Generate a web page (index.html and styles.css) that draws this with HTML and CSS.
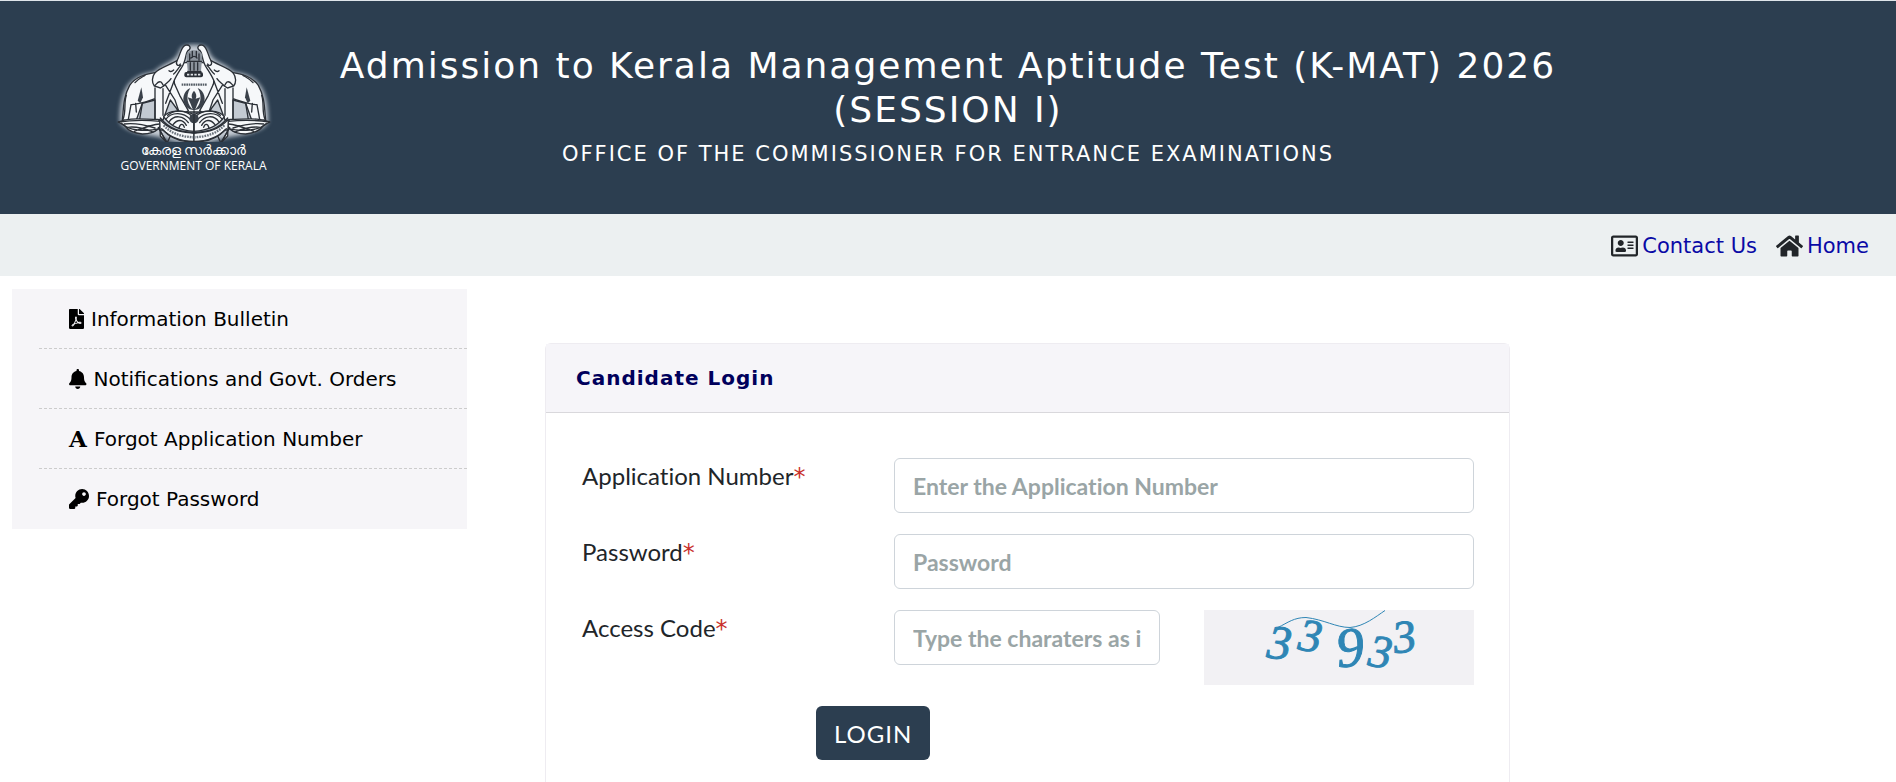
FILE: index.html
```
<!DOCTYPE html>
<html lang="en">
<head>
    <meta charset="UTF-8">
    <title>K-MAT 2026 - Candidate Login</title>
    <meta name="viewport" content="width=device-width, initial-scale=1.0">
    <link rel="stylesheet" href="styles.css">
</head>
<body>
    <header class="site-header">
        <div class="logo">
            <svg class="emblem" viewBox="70 30 474 300" aria-hidden="true">
                <defs>
                    <g id="elephant">
                        <path class="body" d="M92 264C96 230 94 196 114 160C134 132 166 126 190 122C206 106 236 98 256 86C266 70 266 48 280 40C292 36 300 46 292 54C280 56 286 84 270 106C260 122 250 136 246 150L264 190L290 236L270 250L236 204L214 264L190 266L190 204L152 214L134 264L104 266Z"/>
                        <path class="line" d="M190 122C180 136 180 152 188 162L206 168L216 162C222 154 232 150 238 140M188 162C196 156 198 146 208 150C214 156 214 160 216 162M232 116C238 122 242 118 246 114M190 168V264M214 170V250M120 218C146 216 166 208 190 200M246 150L222 214M222 160L250 204L262 240M256 86C250 100 262 104 266 96M104 190C96 214 104 238 94 262M118 218L110 262M132 214L134 240M152 214L144 262M160 130C150 136 140 140 130 152M268 100C258 110 254 120 246 126"/>
                        <path class="shade" d="M149 166L154 196L146 214L138 206Z"/>
                        <path class="body" d="M80 270C110 256 150 262 200 262C216 284 196 304 152 306C128 304 110 296 100 282Z"/>
                        <path class="line" d="M80 270C120 264 150 262 206 268M98 276C124 272 158 278 190 288M108 286C134 282 164 292 184 300M128 298C150 290 176 278 204 276M90 274C110 296 160 300 206 290"/>
                        <path class="body" d="M204 262C238 300 276 300 307 304L307 330C262 330 236 318 214 294L204 294L226 332L206 312Z"/>
                        <path class="line" d="M206 258C236 296 270 298 307 302M210 290C238 320 270 328 307 328M200 286L226 334L236 312"/>
                        <path class="motto" d="M216 280C240 306 270 314 307 316"/>
                        <path class="body" d="M216 254C230 234 276 232 307 248L307 298C268 296 236 284 216 254Z"/>
                        <path class="line" d="M222 262C240 238 276 240 296 262M232 270C248 246 276 252 290 272M244 278C258 260 274 262 284 280M228 250C250 230 284 236 300 252M262 288C266 274 274 274 278 286"/>
                        <path class="curl" d="M296 168C276 176 268 204 282 222C290 232 300 234 306 234C288 222 280 194 296 168Z"/>
                    </g>
                </defs>
                <path class="glow" d="M84 270C84 190 100 130 188 120C220 86 250 96 266 50C280 34 334 34 348 50C364 96 394 86 426 120C514 130 530 190 530 270C510 306 430 310 400 318C340 340 274 340 214 318C184 310 104 306 84 270Z"/>
                <path class="body" d="M272 92L342 92L368 134L356 240L258 240L246 134Z"/>
                <use href="#elephant"/>
                <use href="#elephant" transform="translate(614 0) scale(-1 1)"/>
                <path class="pillar" d="M284 70C286 50 328 50 332 70L328 116L288 116Z"/>
                <path class="line" d="M294 66V84M302 58V76M314 58V76M322 66V84M286 88H330M298 78Q307 68 316 78M288 118H328M296 92V114M307 92V114M318 92V114"/>
                <rect class="base" x="278" y="120" width="56" height="16" rx="6"/>
                <path class="mark" d="M286 128H326"/>
                <path class="legend" d="M270 158H345"/>
                <path class="shade" d="M307 176C314 184 316 192 312 200L326 196L318 214L310 234H304L296 214L288 196L302 200C298 192 300 184 307 176Z"/>
                <circle class="shade" cx="307" cy="260" r="14"/>
                <path class="line" d="M307 236V302"/>
            </svg>
            <span class="logo-ml" lang="ml">കേരള സര്‍ക്കാര്‍</span>
            <span class="logo-en">GOVERNMENT OF KERALA</span>
        </div>
        <div class="titles">
            <h1>Admission to Kerala Management Aptitude Test (K-MAT) 2026 (SESSION I)</h1>
            <p>OFFICE OF THE COMMISSIONER FOR ENTRANCE EXAMINATIONS</p>
        </div>
    </header>

    <nav class="top-nav">
        <a href="#contact">
            <svg class="nav-icon" viewBox="0 0 576 512" aria-hidden="true"><path d="M528 32H48C21.5 32 0 53.5 0 80v352c0 26.5 21.5 48 48 48h480c26.5 0 48-21.5 48-48V80c0-26.5-21.5-48-48-48zm0 400H48V80h480v352zM208 256c35.3 0 64-28.7 64-64s-28.7-64-64-64-64 28.7-64 64 28.7 64 64 64zm-89.6 128h179.2c12.4 0 22.4-8.6 22.4-19.2v-19.2c0-31.8-30.1-57.6-67.2-57.6-10.8 0-18.7 8-44.8 8-26.9 0-33.4-8-44.8-8-37.1 0-67.2 25.8-67.2 57.6v19.2c0 10.6 10 19.2 22.4 19.2zM360 320h112c4.4 0 8-3.6 8-8v-16c0-4.4-3.6-8-8-8H360c-4.4 0-8 3.6-8 8v16c0 4.4 3.6 8 8 8zm0-64h112c4.4 0 8-3.6 8-8v-16c0-4.4-3.6-8-8-8H360c-4.4 0-8 3.6-8 8v16c0 4.4 3.6 8 8 8zm0-64h112c4.4 0 8-3.6 8-8v-16c0-4.4-3.6-8-8-8H360c-4.4 0-8 3.6-8 8v16c0 4.4 3.6 8 8 8z"/></svg>
            Contact Us
        </a>
        <a href="#home">
            <svg class="nav-icon" viewBox="0 0 576 512" aria-hidden="true"><path d="M280.37 148.26L96 300.11V464a16 16 0 0 0 16 16l112.06-.29a16 16 0 0 0 15.92-16V368a16 16 0 0 1 16-16h64a16 16 0 0 1 16 16v95.64a16 16 0 0 0 16 16.05L464 480a16 16 0 0 0 16-16V300L295.67 148.26a12.19 12.19 0 0 0-15.3 0zM571.6 251.47L488 182.56V44.05a12 12 0 0 0-12-12h-56a12 12 0 0 0-12 12v72.61L318.47 43a48 48 0 0 0-61 0L4.34 251.47a12 12 0 0 0-1.6 16.9l25.5 31A12 12 0 0 0 45.15 301l235.22-193.74a12.19 12.19 0 0 1 15.3 0L530.9 301a12 12 0 0 0 16.9-1.6l25.5-31a12 12 0 0 0-1.7-16.93z"/></svg>
            Home
        </a>
    </nav>

    <main>
        <aside class="sidebar">
            <ul>
                <li><a href="#bulletin">
                    <svg class="side-icon" viewBox="0 0 384 512" aria-hidden="true"><path d="M181.9 256.1c-5-16-4.9-46.9-2-46.9 8.4 0 7.6 36.9 2 46.9zm-1.7 47.2c-7.7 20.2-17.3 43.3-28.4 62.7 18.3-7 39-17.2 62.9-21.9-12.7-9.6-24.9-23.4-34.5-40.8zM86.1 428.1c0 .8 13.2-5.4 34.9-40.2-6.7 6.3-29.1 24.5-34.9 40.2zM248 160h136v328c0 13.3-10.7 24-24 24H24c-13.3 0-24-10.7-24-24V24C0 10.7 10.7 0 24 0h200v136c0 13.2 10.8 24 24 24zm-8 171.8c-20-12.2-33.3-29-42.7-53.8 4.5-18.5 11.6-46.6 6.2-64.2-4.7-29.4-42.4-26.5-47.8-6.8-5 18.3-.4 44.1 8.1 77-11.6 27.6-28.7 64.6-40.8 85.8-.1 0-.1.1-.2.1-27.1 13.9-73.6 44.5-54.5 68 5.6 6.9 16 10 21.5 10 17.9 0 35.7-18 61.1-61.8 25.8-8.5 54.1-19.1 79-23.2 21.7 11.8 47.1 19.5 64 19.5 29.2 0 31.2-32 19.7-43.4-13.9-13.6-54.3-9.7-73.6-7.2zM377 105L279 7c-4.5-4.5-10.6-7-17-7h-6v128h128v-6.1c0-6.3-2.5-12.4-7-16.9zm-74.1 255.3c4.1-2.7-2.5-11.9-42.8-9 37.1 15.8 42.8 9 42.8 9z"/></svg>
                    Information Bulletin
                </a></li>
                <li><a href="#notifications">
                    <svg class="side-icon" viewBox="0 0 448 512" aria-hidden="true"><path d="M224 512c35.32 0 63.97-28.65 63.97-64H160.03c0 35.35 28.65 64 63.97 64zm215.39-149.71c-19.32-20.76-55.47-51.99-55.47-154.29 0-77.7-54.48-139.9-127.94-155.16V32c0-17.67-14.32-32-31.98-32s-31.98 14.33-31.98 32v20.84C118.56 68.1 64.08 130.3 64.08 208c0 102.3-36.15 133.53-55.47 154.29-6 6.45-8.66 14.16-8.61 21.71.11 16.4 12.98 32 32.1 32h383.8c19.12 0 32-15.6 32.1-32 .05-7.55-2.61-15.27-8.61-21.71z"/></svg>
                    Notifications and Govt. Orders
                </a></li>
                <li><a href="#forgot-number">
                    <span class="letter-icon" aria-hidden="true">A</span>
                    Forgot Application Number
                </a></li>
                <li><a href="#forgot-password">
                    <svg class="side-icon" viewBox="0 0 512 512" aria-hidden="true"><path d="M512 176.001C512 273.203 433.202 352 336 352c-11.22 0-22.19-1.062-32.827-3.069l-24.012 27.014A23.999 23.999 0 0 1 261.223 384H224v40c0 13.255-10.745 24-24 24h-40v40c0 13.255-10.745 24-24 24H24c-13.255 0-24-10.745-24-24v-78.059c0-6.365 2.529-12.47 7.029-16.971l161.802-161.802C163.108 213.814 160 195.271 160 176 160 78.798 238.797.001 335.999 0 433.488-.001 512 78.511 512 176.001zM336 128c0 26.51 21.49 48 48 48s48-21.49 48-48-21.49-48-48-48-48 21.49-48 48z"/></svg>
                    Forgot Password
                </a></li>
            </ul>
        </aside>

        <section class="card">
            <h2>Candidate Login</h2>
            <form class="login-form">
                <div class="form-row">
                    <label for="app-number">Application Number<span class="required">*</span></label>
                    <input type="text" id="app-number" placeholder="Enter the Application Number">
                </div>
                <div class="form-row">
                    <label for="password">Password<span class="required">*</span></label>
                    <input type="password" id="password" placeholder="Password">
                </div>
                <div class="form-row code-row">
                    <label for="access-code">Access Code<span class="required">*</span></label>
                    <input type="text" id="access-code" placeholder="Type the charaters as in the picture">
                    <svg class="captcha" viewBox="0 0 270 74" role="img" aria-label="Access code">
                        <text transform="translate(62 47) rotate(6)" font-size="48">3</text>
                        <text transform="translate(93 39) rotate(8)" font-size="46">3</text>
                        <text transform="translate(134 57) rotate(-6)" font-size="56">9</text>
                        <text transform="translate(163 55) rotate(8)" font-size="46">3</text>
                        <text transform="translate(191 43) rotate(-8)" font-size="46">3</text>
                        <path d="M74 17C84 12 90 7 102 7C120 9 132 17 146 17C160 16 172 6 181 0"/>
                    </svg>
                </div>
                <button type="submit" class="login-btn">LOGIN</button>
            </form>
        </section>
    </main>
</body>
</html>
```
FILE: styles.css
```
* {
    box-sizing: border-box;
}
body {
    display: flex;
    flex-direction: column;
    min-height: 100vh;
    margin: 0;
    background: #fff;
    color: #212529;
    font-family: Verdana, "DejaVu Sans", sans-serif;
}

/* header */
.site-header {
    display: grid;
    grid-template-columns: 1fr 4fr 1fr;
    height: 214px;
    border-top: 1px solid #dfe5ea;
    background: #2c3e50;
    color: #fff;
}
.logo {
    display: flex;
    flex-direction: column;
    align-items: center;
    padding: 41px 0 0 71px;
}
.emblem {
    width: 158px;
    height: 100px;
}
.emblem .glow {
    fill: #c3cad2;
    filter: blur(6px);
}
.emblem .body {
    fill: #f6f8fa;
    stroke: #2b3037;
    stroke-width: 4;
    stroke-linejoin: round;
}
.emblem .line {
    fill: none;
    stroke: #2b3037;
    stroke-width: 4;
    stroke-linecap: round;
}
.emblem .motto {
    fill: none;
    stroke: #6b737c;
    stroke-width: 7;
    stroke-dasharray: 5 3;
}
.emblem .shade,
.emblem .curl {
    fill: #3a414a;
}
.emblem .pillar {
    fill: #8b939c;
}
.emblem .base {
    fill: #2b3037;
}
.emblem .mark {
    stroke: #dfe3e7;
    stroke-width: 5;
    stroke-dasharray: 7 4;
}
.emblem .legend {
    stroke: #555d66;
    stroke-width: 7;
    stroke-dasharray: 5 2;
}
.logo-ml {
    font-family: "Noto Sans", sans-serif;
    font-size: 14px;
    line-height: 16px;
    white-space: nowrap;
}
.logo-en {
    font-family: "Open Sans", sans-serif;
    font-size: 12px;
    line-height: 16px;
    white-space: nowrap;
}
.titles {
    padding: 43px 15px 0;
    text-align: center;
}
.titles h1 {
    margin: 0 0 9px;
    font-size: 36px;
    line-height: 44px;
    font-weight: normal;
    letter-spacing: 2px;
}
.titles p {
    margin: 0;
    font-size: 21px;
    line-height: 26px;
    letter-spacing: 2px;
}

/* contact / home bar */
.top-nav {
    display: flex;
    justify-content: flex-end;
    align-items: center;
    gap: 19px;
    height: 62px;
    padding: 2px 27px 0;
    background: #ecf0f1;
    font-size: 21px;
}
.top-nav a {
    display: flex;
    align-items: center;
    gap: 4px;
    color: #0a0aa6;
    text-decoration: none;
}
.nav-icon {
    width: 27px;
    height: 24px;
    fill: #212529;
}

main {
    display: flex;
    flex: 1;
    align-items: stretch;
}

/* left menu */
.sidebar {
    align-self: flex-start;
    width: 24%;
    margin: 13px 0 0 12px;
    background: #f6f5f8;
}
.sidebar ul {
    margin: 0;
    padding: 0 0 0 27px;
    list-style: none;
}
.sidebar li {
    height: 60px;
    padding-left: 30px;
    border-bottom: 1px dashed #ccc;
}
.sidebar li:last-child {
    border-bottom: 0;
}
.sidebar a {
    display: flex;
    align-items: center;
    gap: 7px;
    height: 100%;
    color: #000;
    font-size: 20px;
    text-decoration: none;
}
.side-icon {
    height: 20px;
}
.letter-icon {
    width: 18px;
    font-family: "DejaVu Serif", serif;
    font-size: 23px;
    font-weight: bold;
    line-height: 20px;
}

/* login card */
.card {
    flex: 0 1 965px;
    margin: 67px 0 0 78px;
    border: 1px solid #eeecf1;
    border-bottom: 0;
    border-radius: 6px 6px 0 0;
}
.card h2 {
    margin: 0;
    padding: 20px 30px;
    background: #f6f5f9;
    border-bottom: 1px solid #d9d8dc;
    color: #00005c;
    font-size: 20px;
    line-height: 28px;
    letter-spacing: 1px;
}
.login-form {
    padding: 45px 35px 20px 36px;
    font-family: Lato, sans-serif;
    font-variant-ligatures: none;
}
.form-row {
    display: grid;
    grid-template-columns: 312px 1fr;
    align-items: start;
    margin-bottom: 21px;
}
.code-row {
    grid-template-columns: 312px 1fr 270px;
}
.form-row label {
    padding-top: 2px;
    font-size: 24px;
    line-height: 32px;
}
.required {
    color: #c9302c;
    font-family: Verdana, "DejaVu Sans", sans-serif;
    line-height: 1;
}
.form-row input {
    width: 100%;
    height: 55px;
    padding: 0 18px;
    border: 1px solid #ced4da;
    border-radius: 6px;
    background: #fff;
    color: #212529;
    font-family: inherit;
    font-size: 23px;
    font-weight: bold;
    font-variant-ligatures: none;
}
.form-row input::placeholder {
    color: #9aa5a6;
    opacity: 1;
}
.code-row input {
    width: calc(100% - 44px);
}
.captcha {
    width: 270px;
    height: 75px;
    background: #f2f1f4;
}
.captcha text {
    fill: #2f86b5;
    stroke: #2f86b5;
    stroke-width: 1;
    font-family: "Liberation Serif", serif;
    font-style: italic;
}
.captcha path {
    fill: none;
    stroke: #2f86b5;
    stroke-width: 1;
}
.login-btn {
    display: block;
    height: 54px;
    margin-left: 234px;
    padding: 0 18px;
    border: 0;
    border-radius: 6px;
    background: #2c3e50;
    color: #fff;
    font-family: inherit;
    font-size: 24px;
    letter-spacing: 1px;
}
```
